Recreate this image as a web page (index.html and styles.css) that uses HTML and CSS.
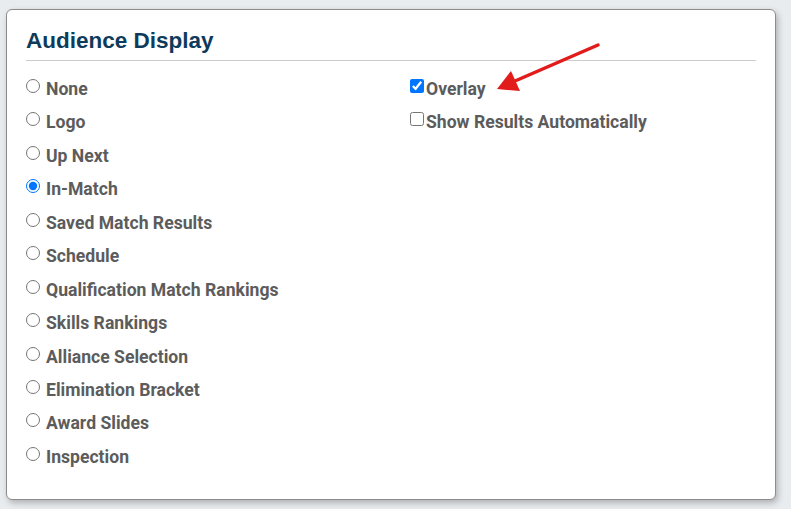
FILE: index.html
```html
<!DOCTYPE html>
<html lang="en">
<head>
    <meta charset="UTF-8" />
    <title>Audience Display</title>
    <link rel="stylesheet" href="styles.css">
</head>
<body>
    <div class="card">
        <h2>Audience Display</h2>

        <div class="columns">
            <div class="options">
                <label class="option"><input type="radio" name="display"> None</label>
                <label class="option"><input type="radio" name="display"> Logo</label>
                <label class="option"><input type="radio" name="display"> Up Next</label>
                <label class="option"><input type="radio" name="display" checked> In-Match</label>
                <label class="option"><input type="radio" name="display"> Saved Match Results</label>
                <label class="option"><input type="radio" name="display"> Schedule</label>
                <label class="option"><input type="radio" name="display"> Qualification Match Rankings</label>
                <label class="option"><input type="radio" name="display"> Skills Rankings</label>
                <label class="option"><input type="radio" name="display"> Alliance Selection</label>
                <label class="option"><input type="radio" name="display"> Elimination Bracket</label>
                <label class="option"><input type="radio" name="display"> Award Slides</label>
                <label class="option"><input type="radio" name="display"> Inspection</label>
            </div>

            <div class="options">
                <label class="option check"><input type="checkbox" checked>Overlay</label>
                <label class="option check"><input type="checkbox">Show Results Automatically</label>
            </div>
        </div>

        <!-- seta vermelha de anotação -->
        <svg class="arrow" width="120" height="65" viewBox="0 0 120 65">
            <line x1="113" y1="10" x2="30" y2="46" stroke="#e21b1b" stroke-width="3.5" stroke-linecap="round" />
            <polygon points="12,54 26,36 35,56" fill="#e21b1b" />
        </svg>
    </div>
</body>
</html>
```

FILE: styles.css
```css
body {
    margin: 0;
    padding: 9px 15px 9px 6px;
    background-color: #e9ecef;
    font-family: Roboto, "Liberation Sans", Arial, sans-serif;
}
.card {
    position: relative;
    width: 770px;
    height: 491px;
    box-sizing: border-box;
    padding: 0 19px;
    background: white;
    border: 1px solid #8c8c8c;
    border-radius: 6px;
    box-shadow: 2px 3px 6px rgba(0,0,0,0.25);
}
h2 {
    margin: 0;
    padding: 18px 0 7px;
    font-family: "Liberation Sans", Arial, sans-serif;
    font-size: 22.5px;
    line-height: 25px;
    font-weight: bold;
    color: #0e3b5b;
    border-bottom: 1px solid #cccccc;
}
.columns {
    display: grid;
    grid-template-columns: 384px 1fr;
    padding-top: 16px;
}
.options {
    display: flex;
    flex-direction: column;
    gap: 9.45px;
}
.option {
    display: flex;
    align-items: flex-start;
    gap: 6px;
    height: 24px;
    line-height: 24px;
    font-size: 17.6px;
    font-weight: bold;
    color: #5c5c5c;
}
.option input {
    width: 14px;
    height: 14px;
    margin: 2px 0 0 0;
    flex: none;
}
.option.check {
    gap: 2px;
}
.arrow {
    position: absolute;
    left: 478px;
    top: 25px;
}
```
